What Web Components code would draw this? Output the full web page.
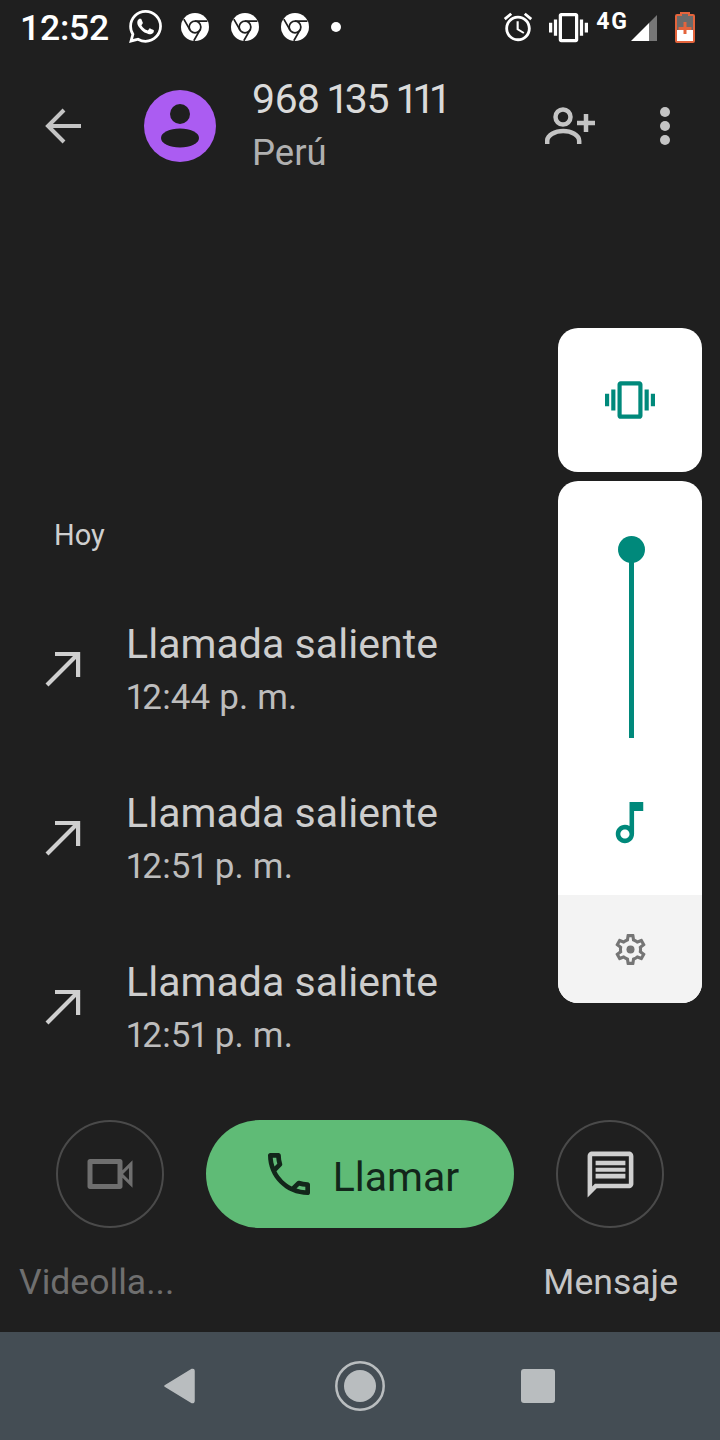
<!DOCTYPE html>
<html lang="es">
<head>
<meta charset="utf-8">
<title>Llamada</title>
<style>
  html, body { margin: 0; background: #1f1f1f; }
  body { font-family: Roboto, "Noto Sans", sans-serif; }
</style>
</head>
<body>
<call-screen>
  <status-bar slot="status"></status-bar>
  <contact-header slot="header" number="968 135 111" place="Perú"></contact-header>
  <call-history slot="history" day="Hoy">
    <call-row label="Llamada saliente" time="12:44 p. m."></call-row>
    <call-row label="Llamada saliente" time="12:51 p. m."></call-row>
    <call-row label="Llamada saliente" time="12:51 p. m."></call-row>
  </call-history>
  <action-bar slot="actions"></action-bar>
  <nav-bar slot="nav"></nav-bar>
  <volume-panel slot="overlay"></volume-panel>
</call-screen>

<script>
// material style icon paths, all on a 24 box
const ICONS = {
  vibrate: 'M0 15h2V9H0v6zm3 2h2V7H3v10zm19-8v6h2V9h-2zm-3 8h2V7h-2v10zM16.5 3h-9C6.67 3 6 3.67 6 4.5v15c0 .83.67 1.5 1.5 1.5h9c.83 0 1.5-.67 1.5-1.5v-15c0-.83-.67-1.5-1.5-1.5zM16 19H8V5h8v14z',
  alarm: 'M22 5.72l-4.6-3.86-1.29 1.53 4.6 3.86L22 5.72zM7.88 3.39L6.6 1.86 2 5.71l1.29 1.53 4.59-3.85zM12.5 8H11v6l4.75 2.85.75-1.23-4-2.37V8zM12 4c-4.97 0-9 4.03-9 9s4.03 9 9 9 9-4.03 9-9-4.03-9-9-9zm0 16c-3.87 0-7-3.13-7-7s3.13-7 7-7 7 3.13 7 7-3.13 7-7 7z',
  whatsapp: 'M17.472 14.382c-.297-.149-1.758-.867-2.03-.967-.273-.099-.471-.148-.67.15-.197.297-.767.966-.94 1.164-.173.199-.347.223-.644.075-.297-.15-1.255-.463-2.39-1.475-.883-.788-1.48-1.761-1.653-2.059-.173-.297-.018-.458.13-.606.134-.133.298-.347.446-.52.149-.174.198-.298.298-.497.099-.198.05-.371-.025-.52-.075-.149-.669-1.612-.916-2.207-.242-.579-.487-.5-.669-.51-.173-.008-.371-.01-.57-.01-.198 0-.52.074-.792.372-.272.297-1.04 1.016-1.04 2.479 0 1.462 1.065 2.875 1.213 3.074.149.198 2.096 3.2 5.077 4.487.709.306 1.262.489 1.694.625.712.227 1.36.195 1.871.118.571-.085 1.758-.719 2.006-1.413.248-.694.248-1.289.173-1.413-.074-.124-.272-.198-.57-.347m-5.421 7.403h-.004a9.87 9.87 0 01-5.031-1.378l-.361-.214-3.741.982.998-3.648-.235-.374a9.86 9.86 0 01-1.51-5.26c.001-5.45 4.436-9.884 9.888-9.884 2.64 0 5.122 1.03 6.988 2.898a9.825 9.825 0 012.893 6.994c-.003 5.45-4.437 9.884-9.885 9.884m8.413-18.297A11.815 11.815 0 0012.05 0C5.495 0 .16 5.335.157 11.892c0 2.096.547 4.142 1.588 5.945L.057 24l6.305-1.654a11.882 11.882 0 005.683 1.448h.005c6.554 0 11.89-5.335 11.893-11.893a11.821 11.821 0 00-3.48-8.413Z',
  note: 'M12 3l.01 10.55c-.59-.34-1.27-.55-2-.55C7.79 13 6 14.79 6 17s1.79 4 4 4 4-1.79 4-4V7h4V3h-6zm-1.99 16c-1.1 0-2-.9-2-2s.9-2 2-2 2 .9 2 2-.9 2-2 2z',
  gear: 'M19.43 12.98c.04-.32.07-.64.07-.98 0-.34-.03-.66-.07-.98l2.11-1.65c.19-.15.24-.42.12-.64l-2-3.46c-.09-.16-.26-.25-.44-.25-.06 0-.12.01-.17.03l-2.49 1c-.52-.4-1.08-.73-1.69-.98l-.38-2.65C14.46 2.18 14.25 2 14 2h-4c-.25 0-.46.18-.49.42l-.38 2.65c-.61.25-1.17.59-1.69.98l-2.49-1c-.06-.02-.12-.03-.18-.03-.17 0-.34.09-.43.25l-2 3.46c-.13.22-.07.49.12.64l2.11 1.65c-.04.32-.07.65-.07.98 0 .33.03.66.07.98l-2.11 1.65c-.19.15-.24.42-.12.64l2 3.46c.09.16.26.25.44.25.06 0 .12-.01.17-.03l2.49-1c.52.4 1.08.73 1.69.98l.38 2.65c.03.24.24.42.49.42h4c.25 0 .46-.18.49-.42l.38-2.65c.61-.25 1.17-.59 1.69-.98l2.49 1c.06.02.12.03.18.03.17 0 .34-.09.43-.25l2-3.46c.12-.22.07-.49-.12-.64l-2.11-1.65zm-1.98-1.71c.04.31.05.52.05.73 0 .21-.02.43-.05.73l-.14 1.13.89.7 1.08.84-.7 1.21-1.27-.51-1.04-.42-.9.68c-.43.32-.84.56-1.25.73l-1.06.43-.16 1.13-.2 1.35h-1.4l-.19-1.35-.16-1.13-1.06-.43c-.43-.18-.83-.41-1.23-.71l-.91-.7-1.06.43-1.27.51-.7-1.21 1.08-.84.89-.7-.14-1.13c-.03-.31-.05-.54-.05-.74s.02-.43.05-.73l.14-1.13-.89-.7-1.08-.84.7-1.21 1.27.51 1.04.42.9-.68c.43-.32.84-.56 1.25-.73l1.06-.43.16-1.13.2-1.35h1.39l.19 1.35.16 1.13 1.06.43c.43.18.83.41 1.23.71l.91.7 1.06-.43 1.27-.51.7 1.21-1.07.85-.89.7.14 1.13z',
  phone: 'M6.54 5c.06.89.21 1.76.45 2.59l-1.2 1.2c-.41-1.2-.67-2.47-.76-3.79h1.51m9.86 12.02c.85.24 1.72.39 2.6.45v1.49c-1.32-.09-2.59-.35-3.8-.75l1.2-1.19M7.5 3H4c-.55 0-1 .45-1 1 0 9.39 7.61 17 17 17 .55 0 1-.45 1-1v-3.49c0-.55-.45-1-1-1-1.24 0-2.45-.2-3.57-.57-.1-.04-.21-.05-.31-.05-.26 0-.51.1-.71.29l-2.2 2.2c-2.83-1.45-5.15-3.76-6.59-6.59l2.2-2.2c.28-.28.36-.67.25-1.02C8.7 6.45 8.5 5.25 8.5 4c0-.55-.45-1-1-1z',
  video: 'M15 8v8H5V8h10m1-2H4c-.55 0-1 .45-1 1v10c0 .55.45 1 1 1h12c.55 0 1-.45 1-1v-3.5l4 4v-11l-4 4V7c0-.55-.45-1-1-1z',
  message: 'M20 2H4c-1.1 0-2 .9-2 2v18l4-4h14c1.1 0 2-.9 2-2V4c0-1.1-.9-2-2-2zm0 14H5.2L4 17.2V4h16v12zM5.5 6h13v2h-13zM5.5 9h13v1.8h-13zM5.5 11.7h13v2h-13z'
};

function icon(name, size, color, extra) {
  return `<svg width="${size}" height="${size}" viewBox="0 0 24 24" fill="${color}" style="display:block;flex:none"><path d="${ICONS[name]}"/>${extra || ''}</svg>`;
}

function chromeIcon() {
  return `<svg width="28" height="28" viewBox="0 0 24 24" style="display:block;flex:none">
    <circle cx="12" cy="12" r="12" fill="#fff"/>
    <g stroke="#1f1f1f" stroke-width="1.5" fill="none">
      <circle cx="12" cy="12" r="5"/>
      <path d="M12 7h10.600M16.300 14.500 11 23.800M7.700 14.500 2.400 5.200"/>
    </g></svg>`;
}

class CallScreen extends HTMLElement {
  constructor() {
    super();
    this.attachShadow({ mode: 'open' }).innerHTML = `
      <style>
        :host { display: flex; flex-direction: column; position: relative; width: 720px; height: 1440px; overflow: hidden; background: #1f1f1f; }
        .overlay { position: absolute; top: 328px; right: 18px; }
      </style>
      <slot name="status"></slot>
      <slot name="header"></slot>
      <slot name="history"></slot>
      <slot name="actions"></slot>
      <slot name="nav"></slot>
      <div class="overlay"><slot name="overlay"></slot></div>`;
  }
}

class StatusBar extends HTMLElement {
  constructor() {
    super();
    this.attachShadow({ mode: 'open' }).innerHTML = `
      <style>
        :host { display: flex; align-items: center; height: 54px; padding: 0 26px 0 20px; color: #fff; font-family: Roboto, sans-serif; }
        .time { font-size: 35.5px; font-weight: 500; margin-right: -2px; letter-spacing: -.2px; position: relative; top: 1px; }
        .left, .right { display: flex; align-items: center; }
        .left { gap: 22px; }
        .wa { width: 33px; height: 34px; margin-right: -3px; }
        .dot { width: 10px; height: 10px; border-radius: 50%; background: #fff; }
        .spacer { flex: 1; }
        .net { font-size: 23px; font-weight: 700; line-height: 19px; margin: -12px 1px 0 8px; letter-spacing: 2px; }
      </style>
      <div class="left">
        <span class="time">12:52</span>
        <span class="wa">${icon('whatsapp', 33, '#fff')}</span>
        ${chromeIcon()}${chromeIcon()}${chromeIcon()}
        <span class="dot"></span>
      </div>
      <div class="spacer"></div>
      <div class="right">
        <span style="margin-right:14px">${icon('alarm', 34, '#fff')}</span>
        ${icon('vibrate', 39, '#fff')}
        <span class="net">4G</span>
        <svg width="28" height="28" viewBox="0 0 28 28" style="display:block;margin-top:2px">
          <path d="M1 27 19 9v18z" fill="#fff"/><path d="M19 9 27 1v26h-8z" fill="#777"/>
        </svg>
        <svg width="20" height="32" viewBox="0 0 20 32" style="display:block;margin-left:17px;margin-right:-1px">
          <path d="M6 2h8v2h4a1 1 0 0 1 1 1v25a1 1 0 0 1-1 1H2a1 1 0 0 1-1-1V5a1 1 0 0 1 1-1h4z" fill="#6b6b6b" stroke="#e4643c" stroke-width="2"/>
          <path d="M2 19h16v11H2z" fill="#fff"/>
          <path d="M8.500 11h3v5h5v3h-5v4h-3v-4h-5v-3h5z" fill="#e4643c"/>
        </svg>
      </div>`;
  }
}

class ContactHeader extends HTMLElement {
  connectedCallback() {
    if (this.shadowRoot) return;
    this.attachShadow({ mode: 'open' }).innerHTML = `
      <style>
        :host { display: flex; align-items: center; height: 144px; padding-left: 45px; font-family: Roboto, sans-serif; }
        .back { margin-right: 63px; }
        .avatar { margin-right: 36px; }
        .who { flex: 1; display: flex; flex-direction: column; padding-bottom: 5px; }
        .number { font-size: 41px; line-height: 50px; color: #dadada; font-variant-numeric: proportional-nums; letter-spacing: -1.2px; }
        .place { font-size: 36.5px; line-height: 40px; color: #b0b0b0; margin-top: 9px; }
        .add { margin-right: 63px; }
        .more { margin-right: 50px; display: flex; flex-direction: column; gap: 3.5px; }
        .more i { width: 10.5px; height: 10.5px; border-radius: 50%; background: #c4c4c4; }
      </style>
      <svg class="back" width="36" height="36" viewBox="0 0 36 36" fill="none" stroke="#c4c4c4" stroke-width="4">
        <path d="M36 18H3M19 2 3 18l16 16"/>
      </svg>
      <svg class="avatar" width="72" height="72" viewBox="0 0 72 72">
        <circle cx="36" cy="36" r="36" fill="#ab5cf2"/>
        <circle cx="36" cy="24" r="10" fill="#1f1f1f"/>
        <ellipse cx="36" cy="48" rx="19" ry="9.500" fill="#1f1f1f"/>
      </svg>
      <div class="who">
        <span class="number">${this.getAttribute('number')}</span>
        <span class="place">${this.getAttribute('place')}</span>
      </div>
      <svg class="add" width="52" height="38" viewBox="0 0 52 38" fill="none" stroke="#c4c4c4" stroke-width="4.500">
        <circle cx="18" cy="10" r="7.500"/>
        <path d="M2.200 37v-3c0-6 8-10 16-10s16 4 16 10v3"/>
        <path d="M41 7v18M32 16h18"/>
      </svg>
      <div class="more"><i></i><i></i><i></i></div>`;
  }
}

class CallHistory extends HTMLElement {
  connectedCallback() {
    if (this.shadowRoot) return;
    this.attachShadow({ mode: 'open' }).innerHTML = `
      <style>
        :host { display: flex; flex: 1; flex-direction: column; padding-top: 321px; font-family: Roboto, sans-serif; }
        .day { font-size: 29px; line-height: 32px; color: #cfcfcf; padding-left: 54px; margin-bottom: 68px; }
        .rows { display: flex; flex-direction: column; gap: 49px; }
      </style>
      <div class="day">${this.getAttribute('day')}</div>
      <div class="rows"><slot></slot></div>`;
  }
}

class CallRow extends HTMLElement {
  connectedCallback() {
    if (this.shadowRoot) return;
    this.attachShadow({ mode: 'open' }).innerHTML = `
      <style>
        :host { display: grid; grid-template-columns: 126px 1fr; height: 120px; font-family: Roboto, sans-serif; }
        svg { margin: 31px 0 0 44px; }
        .label { font-size: 41px; line-height: 50px; color: #cdcdcd; letter-spacing: .05px; }
        .time { font-size: 35px; line-height: 40px; color: #bdbdbd; margin: 9px 0 0 1px; font-variant-numeric: proportional-nums; letter-spacing: .15px; }
      </style>
      <svg width="38" height="38" viewBox="0 0 38 38" fill="none" stroke="#cfcfcf" stroke-width="4.200">
        <path d="M3 35 33 5M11 4h23.100v23" />
      </svg>
      <div>
        <div class="label">${this.getAttribute('label')}</div>
        <div class="time">${this.getAttribute('time')}</div>
      </div>`;
  }
}

class ActionBar extends HTMLElement {
  constructor() {
    super();
    this.attachShadow({ mode: 'open' }).innerHTML = `
      <style>
        :host { display: flex; flex-direction: column; height: 212px; font-family: Roboto, sans-serif; }
        .buttons { display: flex; align-items: center; gap: 42px; padding: 0 56px; }
        .round { box-sizing: border-box; width: 108px; height: 108px; border-radius: 50%; border: 2px solid #4a4a4a; display: flex; align-items: center; justify-content: center; }
        .call { display: flex; align-items: center; justify-content: center; gap: 16px; width: 308px; height: 108px; border-radius: 54px; background: #5fbb76; color: #12261a; font-size: 41px; }
        .call span { padding-top: 6px; }
        .labels { display: flex; justify-content: space-between; padding: 0 42px 0 19px; margin-top: 32px; font-size: 35.6px; line-height: 44px; }
        .off { color: #6f6f6f; }
        .on { color: #c6c6c6; }
      </style>
      <div class="buttons">
        <div class="round">${icon('video', 60, '#6f6f6f', '<path d="M17.200 12l2.400-2.400v4.800z" fill="#1f1f1f"/>')}</div>
        <div class="call">${icon('phone', 56, '#12261a')}<span>Llamar</span></div>
        <div class="round">${icon('message', 55, '#cfcfcf')}</div>
      </div>
      <div class="labels"><span class="off">Videolla...</span><span class="on">Mensaje</span></div>`;
  }
}

class NavBar extends HTMLElement {
  constructor() {
    super();
    this.attachShadow({ mode: 'open' }).innerHTML = `
      <style>
        :host { display: flex; align-items: center; justify-content: space-between; box-sizing: border-box; height: 108px; padding: 0 165px 0 162px; background: #444d54; }
      </style>
      <svg width="34" height="38" viewBox="0 0 34 38" style="display:block">
        <path d="M30 2.500 3 19l27 16.500a1.500 1.500 0 0 0 2-1.500V4a1.500 1.500 0 0 0-2-1.500z" fill="#b9bdbf" stroke="#b9bdbf" stroke-width="1.500" stroke-linejoin="round"/>
      </svg>
      <svg width="50" height="50" viewBox="0 0 50 50" style="display:block;margin-left:3px">
        <circle cx="25" cy="25" r="23.700" fill="none" stroke="#b9bdbf" stroke-width="2.500"/>
        <circle cx="25" cy="25" r="16" fill="#b9bdbf"/>
      </svg>
      <div style="width:34px;height:34px;border-radius:3px;background:#b9bdbf"></div>`;
  }
}

class VolumePanel extends HTMLElement {
  constructor() {
    super();
    this.attachShadow({ mode: 'open' }).innerHTML = `
      <style>
        :host { display: flex; flex-direction: column; gap: 9px; width: 144px; }
        .card { background: #fff; border-radius: 20px; overflow: hidden; }
        .mode { height: 144px; display: flex; align-items: center; justify-content: center; }
        .slider { height: 414px; display: flex; flex-direction: column; align-items: center; padding-left: 2px; box-sizing: border-box; }
        .knob { width: 27px; height: 27px; border-radius: 50%; background: #00897b; margin-top: 55px; }
        .track { width: 5px; height: 178px; background: #00897b; margin-top: -3px; }
        .note { margin: 57px 3px 0 0; }
        .settings { height: 108px; background: #f3f3f3; display: flex; align-items: center; justify-content: center; }
      </style>
      <div class="card mode">${icon('vibrate', 50, '#00897b')}</div>
      <div class="card">
        <div class="slider">
          <div class="knob"></div>
          <div class="track"></div>
          <div class="note">${icon('note', 55, '#00897b')}</div>
        </div>
        <div class="settings">${icon('gear', 37, '#757575', '<circle cx="12" cy="12" r="2.600" fill="#757575"/>')}</div>
      </div>`;
  }
}

customElements.define('call-screen', CallScreen);
customElements.define('status-bar', StatusBar);
customElements.define('contact-header', ContactHeader);
customElements.define('call-history', CallHistory);
customElements.define('call-row', CallRow);
customElements.define('action-bar', ActionBar);
customElements.define('nav-bar', NavBar);
customElements.define('volume-panel', VolumePanel);
</script>
</body>
</html>
